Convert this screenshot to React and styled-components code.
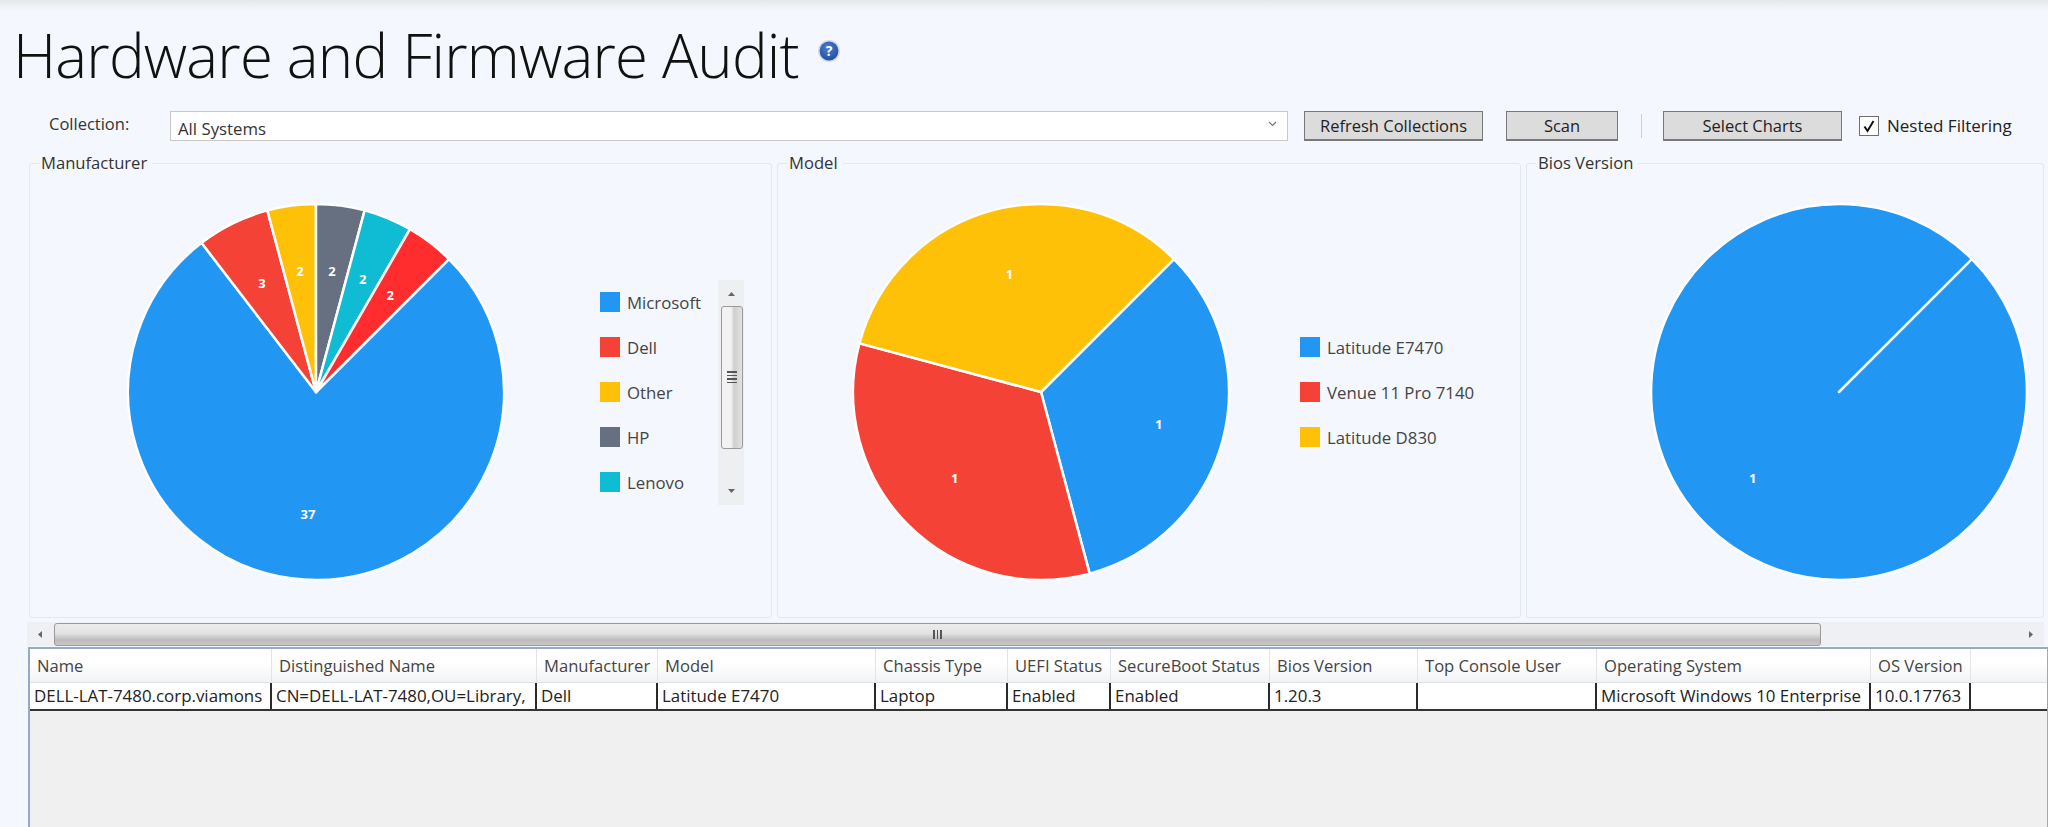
import React from "react";
import styled, { createGlobalStyle } from "styled-components";

const Global = createGlobalStyle`
  html, body { margin: 0; padding: 0; height: 827px; overflow: hidden; background: #f4f7fd; }
  body { font-family: "Open Sans", "Liberation Sans", sans-serif; color: #333; }
  #root { height: 827px; }
`;

const Page = styled.div`
  height: 827px;
  display: flex;
  flex-direction: column;
  background: #f4f7fd;
  overflow: hidden;
`;
const TopBand = styled.div`
  height: 10px;
  flex: none;
  background: linear-gradient(#e6e7e9, #f4f7fd);
`;
const TitleRow = styled.header`
  height: 100px;
  flex: none;
  display: flex;
  align-items: flex-start;
  padding-left: 13px;
  box-sizing: border-box;
`;
const Title = styled.h1`
  margin: 6px 0 0;
  font-family: "Open Sans", sans-serif;
  font-weight: 300;
  font-size: 60px;
  line-height: 78px;
  letter-spacing: -0.8px;
  color: #111;
  white-space: nowrap;
`;
const HelpIcon = styled.svg`
  width: 24px;
  height: 24px;
  margin: 29px 0 0 18px;
  flex: none;
`;
const Toolbar = styled.div`
  height: 31px;
  flex: none;
  display: flex;
  align-items: center;
  padding-left: 49px;
  font-size: 17px;
  color: #333;
`;
const ToolLabel = styled.span`
  width: 121px;
  flex: none;
  font-size: 16.5px;
  margin-top: -5px;
`;
const Combo = styled.div`
  width: 1118px;
  height: 30px;
  box-sizing: border-box;
  flex: none;
  border: 1px solid #c9c9c9;
  background: #fff;
  display: flex;
  align-items: flex-end;
  justify-content: space-between;
  padding: 0 8px 0 7px;
  font-size: 16.8px;
  line-height: 23px;
  color: #333;
`;
const ComboArrow = styled.svg`
  width: 9px;
  height: 6px;
  align-self: center;
  margin: -4px 2px 0 0;
`;
const Button = styled.button`
  width: ${(p) => p.$w}px;
  height: 30px;
  flex: none;
  margin-left: ${(p) => p.$gap}px;
  box-sizing: border-box;
  border: 1px solid #787878;
  border-bottom-width: 2px;
  background: #dcdcdc;
  color: #222;
  font: 16.5px "Open Sans", sans-serif;
  padding: 0;
  white-space: nowrap;
`;
const Separator = styled.div`
  width: 1px;
  height: 24px;
  flex: none;
  margin-left: 23px;
  background: #cdd0d4;
`;
const CheckBox = styled.span`
  width: 20px;
  height: 20px;
  margin-left: 17px;
  flex: none;
  box-sizing: border-box;
  border: 1px solid #6f6f6f;
  background: #fff;
  display: flex;
  align-items: center;
  justify-content: center;
`;
const CheckLabel = styled.span`
  margin-left: 8px;
  font-size: 17px;
  white-space: nowrap;
  color: #222;
`;
const Charts = styled.div`
  height: 465px;
  margin-top: 12px;
  flex: none;
  display: flex;
  padding-left: 29px;
  gap: 5px;
`;
const Group = styled.fieldset`
  width: ${(p) => p.$w}px;
  flex: none;
  margin: 0;
  box-sizing: border-box;
  min-width: 0;
  border: 1.5px solid #e3e8ef;
  border-radius: 3px;
  padding: 0;
`;
const GroupLabel = styled.legend`
  padding: 0 5px 0 2px;
  margin-left: 9px;
  font-size: 16.6px;
  line-height: 20px;
  color: #333;
`;
const ChartBody = styled.div`
  display: flex;
  align-items: center;
  padding: 29px 0 0 ${(p) => p.$pad}px;
`;
const PieSvg = styled.svg`
  width: 380px;
  height: 380px;
  flex: none;
`;
const PieLabel = styled.text`
  font: 700 13px "Open Sans", sans-serif;
  fill: #fff;
  text-anchor: middle;
  dominant-baseline: central;
`;
const LegendWrap = styled.div`
  display: flex;
  align-items: center;
  margin-left: ${(p) => p.$gap}px;
`;
const LegendList = styled.ul`
  list-style: none;
  margin: 0;
  padding: 0;
  width: ${(p) => p.$w}px;
  display: flex;
  flex-direction: column;
  gap: 25px;
`;
const LegendRow = styled.li`
  display: flex;
  align-items: center;
  gap: 7px;
  height: 20px;
  font-size: 16.8px;
  color: #444;
  white-space: nowrap;
`;
const Swatch = styled.span`
  width: 20px;
  height: 20px;
  flex: none;
  background: ${(p) => p.$c};
`;
const VScroll = styled.div`
  width: 26px;
  height: 225px;
  background: #eeeff1;
  display: flex;
  flex-direction: column;
  align-items: center;
  justify-content: space-between;
  padding: 9px 0;
  box-sizing: border-box;
  position: relative;
`;
const VThumb = styled.div`
  position: absolute;
  left: 3px;
  top: 26px;
  width: 22px;
  height: 143px;
  box-sizing: border-box;
  border: 1.5px solid #9a9a9a;
  border-radius: 3px;
  background: linear-gradient(90deg, #f2f2f2 0 45%, #cfcfcf 60%, #e2e2e2 100%);
  display: flex;
  flex-direction: column;
  align-items: center;
  justify-content: center;
  gap: 2px;
`;
const GripLine = styled.span`
  width: 10px;
  height: 1.5px;
  background: #555;
`;
const HScroll = styled.div`
  height: 24px;
  flex: none;
  margin: 4px 0 0 27px;
  width: 2017px;
  display: flex;
  align-items: center;
  background: #eef0f3;
  padding: 0 9px 0 9px;
  box-sizing: border-box;
`;
const HThumb = styled.div`
  margin-left: 9px;
  width: 1767px;
  height: 23px;
  box-sizing: border-box;
  border: 1px solid #9a9a9a;
  border-radius: 3px;
  background: linear-gradient(#ececec 0%, #e2e2e2 45%, #bcbcbc 75%, #c6c6c6 100%);
  display: flex;
  align-items: center;
  justify-content: center;
  margin-right: auto;
  gap: 2px;
`;
const HGrip = styled.span`
  width: 1.5px;
  height: 9px;
  background: #555;
`;
const Table = styled.div`
  flex: 1;
  margin: 1px 0 0 28px;
  border: 2px solid #93abc6;
  border-bottom: none;
  border-right-width: 1px;
  background: #f0f0f0;
  overflow: hidden;
`;
const Row = styled.div`
  display: grid;
  grid-template-columns: 242px 265px 121px 218px 132px 103px 159px 148px 179px 274px 100px 1fr;
  height: ${(p) => p.$h}px;
  box-sizing: border-box;
  background: ${(p) => p.$bg};
  border-bottom: ${(p) => p.$line};
`;
const HeadCell = styled.div`
  box-sizing: border-box;
  border-right: 1px solid #e2e4e8;
  padding: 5px 0 0 7px;
  font-size: 16.6px;
  line-height: 24px;
  color: #444;
  white-space: nowrap;
  overflow: hidden;
  &:last-child { border-right: none; }
`;
const DataCell = styled.div`
  box-sizing: border-box;
  border-right: 2px solid #2a2a2a;
  padding: 1px 0 0 4px;
  font-size: 16.9px;
  line-height: 24px;
  color: #222;
  white-space: nowrap;
  overflow: hidden;
  &:last-child { border-right: none; }
`;

const rad = (d) => ((d - 90) * Math.PI) / 180;
const pt = (a, r) => [190 + r * Math.cos(rad(a)), 190 + r * Math.sin(rad(a))];

function Pie({ slices }) {
  const total = slices.reduce((s, x) => s + x.v, 0);
  let a = 45;
  const R = 188;
  return (
    <PieSvg viewBox="0 0 380 380">
      {slices.map((s, i) => {
        const sweep = (s.v / total) * 360;
        const [x0, y0] = pt(a, R);
        const [xm, ym] = pt(a + sweep / 2, R);
        const [x1, y1] = pt(a + sweep, R);
        const [lx, ly] = pt(a + sweep / 2, 122);
        a += sweep;
        const d = `M190 190L${x0} ${y0}A${R} ${R} 0 0 1 ${xm} ${ym}A${R} ${R} 0 0 1 ${x1} ${y1}Z`;
        return (
          <g key={i}>
            <path d={d} fill={s.c} stroke="#fff" strokeWidth="2.5" strokeLinejoin="round" />
            <PieLabel x={lx} y={ly}>{s.v}</PieLabel>
          </g>
        );
      })}
    </PieSvg>
  );
}

const Tri = ({ d }) => (
  <svg width="9" height="9" viewBox="0 0 9 9">
    <path d={d} fill="#666" />
  </svg>
);

const cols = ["Name","Distinguished Name","Manufacturer","Model","Chassis Type","UEFI Status","SecureBoot Status","Bios Version","Top Console User","Operating System","OS Version",""];
const row = ["DELL-LAT-7480.corp.viamons","CN=DELL-LAT-7480,OU=Library,","Dell","Latitude E7470","Laptop","Enabled","Enabled","1.20.3","","Microsoft Windows 10 Enterprise","10.0.17763",""];

const maker = [
  { n: "Microsoft", v: 37, c: "#2196f3" },
  { n: "Dell", v: 3, c: "#f44336" },
  { n: "Other", v: 2, c: "#ffc107" },
  { n: "HP", v: 2, c: "#667080" },
  { n: "Lenovo", v: 2, c: "#0fbcd4" },
  { n: "", v: 2, c: "#ff2d2d" },
];
const model = [
  { n: "Latitude E7470", v: 1, c: "#2196f3" },
  { n: "Venue 11 Pro 7140", v: 1, c: "#f44336" },
  { n: "Latitude D830", v: 1, c: "#ffc107" },
];
const bios = [{ n: "", v: 1, c: "#2196f3" }];

export default function App() {
  return (
    <Page>
      <Global />
      <TopBand />
      <TitleRow>
        <Title>Hardware and Firmware Audit</Title>
        <HelpIcon viewBox="0 0 24 24">
          <defs>
            <radialGradient id="hg" cx="45%" cy="35%" r="70%">
              <stop offset="0" stopColor="#4d7fd0" />
              <stop offset="1" stopColor="#1f4ba0" />
            </radialGradient>
          </defs>
          <circle cx="12" cy="12" r="11" fill="#cfd9ea" />
          <circle cx="12" cy="12" r="9.4" fill="url(#hg)" />
          <text x="12" y="17" textAnchor="middle" fontSize="14" fontWeight="700" fill="#fff" fontFamily="Open Sans, sans-serif">?</text>
        </HelpIcon>
      </TitleRow>
      <Toolbar>
        <ToolLabel>Collection:</ToolLabel>
        <Combo>
          <span>All Systems</span>
          <ComboArrow viewBox="0 0 9 6">
            <path d="M1 1l3.5 3.5L8 1" fill="none" stroke="#777" strokeWidth="1.2" />
          </ComboArrow>
        </Combo>
        <Button $w={179} $gap={16}>Refresh Collections</Button>
        <Button $w={112} $gap={23}>Scan</Button>
        <Separator />
        <Button $w={179} $gap={21}>Select Charts</Button>
        <CheckBox>
          <svg width="14" height="14" viewBox="0 0 14 14">
            <path d="M2.5 7.5l3 4.5 6-10" fill="none" stroke="#111" strokeWidth="2" />
          </svg>
        </CheckBox>
        <CheckLabel>Nested Filtering</CheckLabel>
      </Toolbar>
      <Charts>
        <Group $w={743}>
          <GroupLabel>Manufacturer</GroupLabel>
          <ChartBody $pad={96}>
            <Pie slices={maker} />
            <LegendWrap $gap={94}>
              <LegendList $w={118}>
                {maker.slice(0, 5).map((m) => (
                  <LegendRow key={m.n}><Swatch $c={m.c} />{m.n}</LegendRow>
                ))}
              </LegendList>
              <VScroll>
                <Tri d="M1 7l3.5-4L8 7z" />
                <VThumb>
                  <GripLine /><GripLine /><GripLine /><GripLine />
                </VThumb>
                <Tri d="M1 2l3.5 4L8 2z" />
              </VScroll>
            </LegendWrap>
          </ChartBody>
        </Group>
        <Group $w={744}>
          <GroupLabel>Model</GroupLabel>
          <ChartBody $pad={73}>
            <Pie slices={model} />
            <LegendWrap $gap={69}>
              <LegendList $w={200}>
                {model.map((m) => (
                  <LegendRow key={m.n}><Swatch $c={m.c} />{m.n}</LegendRow>
                ))}
              </LegendList>
            </LegendWrap>
          </ChartBody>
        </Group>
        <Group $w={518}>
          <GroupLabel>Bios Version</GroupLabel>
          <ChartBody $pad={122}>
            <Pie slices={bios} />
          </ChartBody>
        </Group>
      </Charts>
      <HScroll>
        <Tri d="M6 1L2 4.5 6 8z" />
        <HThumb><HGrip /><HGrip /><HGrip /></HThumb>
        <Tri d="M3 1l4 3.5L3 8z" />
      </HScroll>
      <Table>
        <Row $h={34} $bg="linear-gradient(#fff 0 40%, #f2f3f5 100%)" $line="1px solid #dfe1e4">
          {cols.map((c, i) => <HeadCell key={i}>{c}</HeadCell>)}
        </Row>
        <Row $h={28} $bg="#fff" $line="2px solid #333">
          {row.map((c, i) => <DataCell key={i}>{c}</DataCell>)}
        </Row>
      </Table>
    </Page>
  );
}
